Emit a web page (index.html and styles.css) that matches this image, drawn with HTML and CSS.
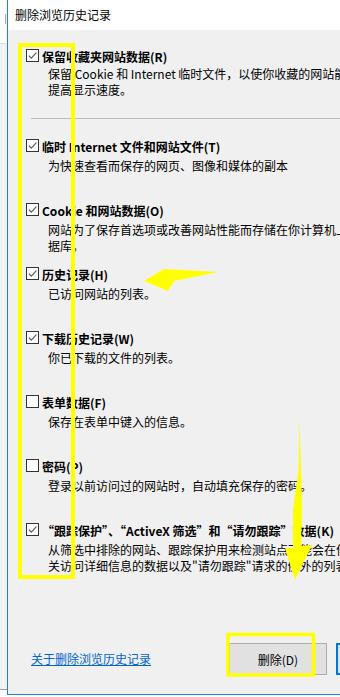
FILE: index.html
```html
<!DOCTYPE html>
<html lang="zh-CN">
  <head>
    <meta charset="UTF-8" />
    <meta name="viewport" content="width=device-width, initial-scale=1.0" />
    <title>删除浏览历史记录</title>
    <link rel="stylesheet" href="styles.css">
  </head>
  <body>
    <div class="screen">
      <div class="behind">
        <div class="behind-top"><span class="tick"></span></div>
        <div class="behind-panel"></div>
        <div class="behind-line"></div>
      </div>

      <div class="dialog">
        <div class="titlebar">删除浏览历史记录</div>

        <div class="client">
          <div class="options">
            <div class="option first">
              <div class="option-label">
                <span class="box checked"><svg viewBox="0 0 11 11"><polyline points="1.8,5.6 4.3,8.1 9.4,2.6" /></svg></span>
                <b>保留收藏夹网站数据(R)</b>
              </div>
              <div class="option-desc tight">保留 Cookie 和 Internet 临时文件，以使你收藏的网站能够保存偏好选项并<br>提高显示速度。</div>
            </div>
            <div class="rule"></div>

            <div class="option">
              <div class="option-label">
                <span class="box checked"><svg viewBox="0 0 11 11"><polyline points="1.8,5.6 4.3,8.1 9.4,2.6" /></svg></span>
                <b>临时 Internet 文件和网站文件(T)</b>
              </div>
              <div class="option-desc">为快速查看而保存的网页、图像和媒体的副本</div>
            </div>

            <div class="option">
              <div class="option-label">
                <span class="box checked"><svg viewBox="0 0 11 11"><polyline points="1.8,5.6 4.3,8.1 9.4,2.6" /></svg></span>
                <b>Cookie 和网站数据(O)</b>
              </div>
              <div class="option-desc">网站为了保存首选项或改善网站性能而存储在你计算机上的文件或数<br>据库。</div>
            </div>

            <div class="option">
              <div class="option-label">
                <span class="box checked"><svg viewBox="0 0 11 11"><polyline points="1.8,5.6 4.3,8.1 9.4,2.6" /></svg></span>
                <b>历史记录(H)</b>
              </div>
              <div class="option-desc">已访问网站的列表。</div>
            </div>

            <div class="option">
              <div class="option-label">
                <span class="box checked"><svg viewBox="0 0 11 11"><polyline points="1.8,5.6 4.3,8.1 9.4,2.6" /></svg></span>
                <b>下载历史记录(W)</b>
              </div>
              <div class="option-desc">你已下载的文件的列表。</div>
            </div>

            <div class="option">
              <div class="option-label">
                <span class="box"></span>
                <b>表单数据(F)</b>
              </div>
              <div class="option-desc">保存在表单中键入的信息。</div>
            </div>

            <div class="option">
              <div class="option-label">
                <span class="box"></span>
                <b>密码(P)</b>
              </div>
              <div class="option-desc">登录以前访问过的网站时，自动填充保存的密码。</div>
            </div>

            <div class="option">
              <div class="option-label">
                <span class="box checked"><svg viewBox="0 0 11 11"><polyline points="1.8,5.6 4.3,8.1 9.4,2.6" /></svg></span>
                <b>“跟踪保护”、“ActiveX 筛选”和“请勿跟踪”数据(K)</b>
              </div>
              <div class="option-desc">从筛选中排除的网站、跟踪保护用来检测站点可能会在何时共享你的相<br>关访问详细信息的数据以及"请勿跟踪"请求的例外的列表。</div>
            </div>
          </div>

          <div class="footer">
            <a href="#" class="help-link">关于删除浏览历史记录</a>
            <div class="buttons">
              <button type="button" class="btn">删除(D)</button>
              <button type="button" class="btn default">关闭</button>
            </div>
          </div>
        </div>
      </div>
    </div>

    <!-- 黄色标注 -->
    <svg class="marks" width="340" height="697" viewBox="0 0 340 697">
      <rect x="20" y="45" width="53" height="532" />
      <rect x="228" y="634.5" width="85.5" height="40.5" class="thin" />
      <polygon points="144,281 164,269 218,272 174,281 168,291" />
      <polygon points="299.5,420 301,470 302,510 301,546 312,545 295,580 285,548 293,548 293,510 298.5,470" />
    </svg>
  </body>
</html>
```

FILE: styles.css
```css
* {
  box-sizing: border-box;
}
html,
body {
  margin: 0;
  padding: 0;
  height: 697px;
  overflow: hidden;
  background-color: #fff;
}
body {
  font-family: "Noto Sans CJK SC", "Microsoft YaHei", sans-serif;
  font-size: 12px;
  color: #000;
  position: relative;
}
.screen {
  display: flex;
  align-items: flex-start;
  width: 460px;
}
.behind {
  width: 7px;
  height: 697px;
  flex: none;
  display: flex;
  flex-direction: column;
}
.behind-top {
  height: 43px;
  background-color: #fff;
}
.tick {
  display: block;
  width: 1px;
  height: 10px;
  margin: 14px 0 0 5px;
  background-color: #a8a8a8;
}
.behind-panel {
  height: 646px;
  background-color: #f0f0f0;
  border-top: 1px solid #dcdcdc;
  border-right: 3px solid #f0f0f0;
  box-shadow: inset -1px 0 0 #fafafa;
}
.behind-line {
  height: 1px;
  background-color: #a0a0a0;
}
.dialog {
  width: 440px;
  height: 695px;
  flex: none;
  display: flex;
  flex-direction: column;
  border-left: 1px solid #1883d7;
  border-right: 1px solid #1883d7;
  border-bottom: 1px solid #1883d7;
}
.titlebar {
  height: 30px;
  line-height: 30px;
  padding-left: 7px;
  background-color: #fff;
}
.client {
  flex: 1;
  display: flex;
  flex-direction: column;
  background-color: #f0f0f0;
  padding-top: 19px;
}
.options {
  padding-left: 18px;
}
.option {
  height: 64px;
}
.option.first {
  height: 69px;
}
.rule {
  height: 1px;
  margin: 0 0 20px 5px;
  background-color: #bcbcbc;
}
.option-label {
  display: flex;
  align-items: flex-start;
  gap: 3px;
  height: 16px;
  line-height: 16px;
  white-space: nowrap;
}
.option-label b {
  font-weight: bold;
}
.box {
  width: 13px;
  height: 13px;
  flex: none;
  border: 1px solid #333;
  background-color: #fff;
}
.box svg {
  display: block;
  width: 11px;
  height: 11px;
}
.box polyline {
  fill: none;
  stroke: #5a5a5a;
  stroke-width: 1.2;
}
.option-desc {
  margin: 3px 0 0 22px;
  line-height: 16px;
  white-space: nowrap;
}
.option-desc.tight {
  margin-top: 1px;
}
.footer {
  margin-top: auto;
  display: flex;
  align-items: center;
  justify-content: space-between;
  padding: 0 12px 19px 23px;
}
.help-link {
  color: #0066cc;
  text-decoration: underline;
  line-height: 16px;
}
.buttons {
  display: flex;
  gap: 9px;
}
.btn {
  width: 98px;
  height: 32px;
  border: 1px solid #adadad;
  background-color: #e1e1e1;
  font-family: inherit;
  font-size: 12px;
  color: #000;
  padding: 0;
}
.btn.default {
  border: 2px solid #0078d7;
}
.marks {
  position: absolute;
  top: 0;
  left: 0;
  pointer-events: none;
}
.marks rect {
  fill: none;
  stroke: #ffff00;
  stroke-width: 4;
}
.marks rect.thin {
  stroke-width: 3.5;
}
.marks polygon {
  fill: #ffff00;
}
```
